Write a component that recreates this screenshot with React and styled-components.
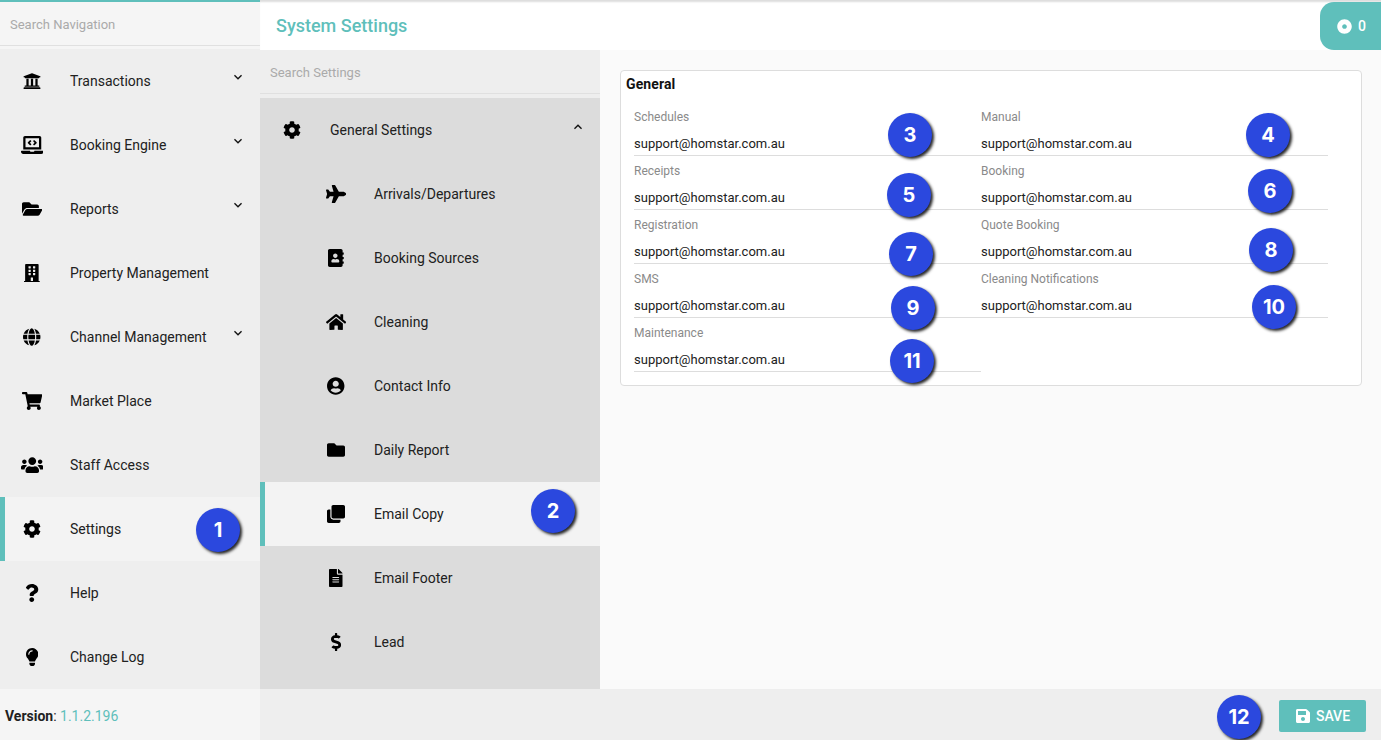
import React from 'react';
import styled, { createGlobalStyle } from 'styled-components';
import {
  FaUniversity, FaLaptopCode, FaFolderOpen, FaBuilding, FaGlobe, FaShoppingCart, FaUsers, FaCog,
  FaQuestion, FaLightbulb, FaPlane, FaAddressBook, FaHome, FaUserCircle, FaFolder, FaClone,
  FaFileAlt, FaDollarSign, FaSave, FaDotCircle,
} from 'react-icons/fa';
import { MdExpandMore, MdExpandLess } from 'react-icons/md';

const teal = '#5fbfbb';

const Global = createGlobalStyle`
  html, body { margin: 0; padding: 0; }
  body { font-family: Roboto, "Liberation Sans", sans-serif; font-size: 14px; color: #212121; overflow: hidden; }
`;

const Shell = styled.div`
  position: relative;
  display: flex;
  width: 1381px;
  height: 740px;
  overflow: hidden;
  background: #fafafa;
`;

const Sidebar = styled.aside`
  width: 260px;
  flex: none;
  display: flex;
  flex-direction: column;
  border-top: 2px solid ${teal};
  box-sizing: border-box;
  background: #eee;
`;

const SearchArea = styled.div`
  flex: none;
  background: ${(p) => p.$bg};
  padding-bottom: ${(p) => p.$gap}px;
`;

const SearchBox = styled.div`
  height: 44px;
  box-sizing: border-box;
  display: flex;
  align-items: center;
  padding: 1px 0 0 10px;
  border-bottom: 1px solid #e0e0e0;
  color: #aaa;
  font-size: 13px;
`;

const NavList = styled.nav`
  flex: 1;
  display: flex;
  flex-direction: column;
  background: ${(p) => p.$bg};
`;

const NavRow = styled.div`
  position: relative;
  height: 64px;
  flex: none;
  display: flex;
  align-items: center;
  box-sizing: border-box;
  padding-left: ${(p) => p.$indent}px;
  background: ${(p) => (p.$active ? '#f3f3f3' : 'transparent')};
  border-left: ${(p) => (p.$active ? `5px solid ${teal}` : 'none')};
`;

// FontAwesome glyphs keep their own width, $w is viewBox width / 512
const NavIcon = styled.span`
  width: 22px;
  flex: none;
  display: flex;
  justify-content: center;
  margin-left: ${(p) => (p.$active ? -5 : 0)}px;
  color: #000;
  svg { width: ${(p) => 18 * p.$w}px; height: 18px; flex: none; }
`;

const NavLabel = styled.span`
  margin-left: 27px;
  font-size: 14px;
  color: #212121;
`;

const Chevron = styled.span`
  position: absolute;
  right: 14px;
  top: ${(p) => p.$top}px;
  display: flex;
  font-size: 16px;
  color: #111;
`;

const VersionBar = styled.div`
  height: 51px;
  flex: none;
  display: flex;
  align-items: center;
  box-sizing: border-box;
  padding: 2px 0 0 5px;
  background: #f5f5f5;
  font-size: 14px;
  b { font-weight: 700; }
  span { color: ${teal}; }
`;

const Main = styled.div`
  flex: 1;
  min-width: 0;
  display: flex;
  flex-direction: column;
`;

const Header = styled.header`
  height: 50px;
  flex: none;
  display: flex;
  justify-content: space-between;
  background: #fff;
  box-sizing: border-box;
  padding-top: 2px;
  box-shadow: inset 0 3px 2px -1px #ddd;
`;

const Title = styled.h1`
  margin: 0;
  padding-left: 16px;
  font-size: 18px;
  line-height: 47px;
  font-weight: 500;
  color: ${teal};
`;

const CountPill = styled.div`
  width: 61px;
  display: flex;
  align-items: center;
  gap: 6px;
  box-sizing: border-box;
  padding-left: 17px;
  background: ${teal};
  border-radius: 14px 0 0 14px;
  color: #fff;
  font-size: 14px;
  font-weight: 500;
  svg { font-size: 15px; }
`;

const Body = styled.div`
  flex: 1;
  min-height: 0;
  display: flex;
`;

const SubColumn = styled.div`
  width: 340px;
  flex: none;
  display: flex;
  flex-direction: column;
  background: #eee;
`;

const Content = styled.section`
  flex: 1;
  padding: 20px 19px 0 20px;
  background: #fafafa;
`;

const Card = styled.div`
  height: 316px;
  box-sizing: border-box;
  padding: 5px 13px 0 5px;
  background: #fff;
  border: 1px solid #ddd;
  border-radius: 4px;
`;

const CardTitle = styled.h2`
  margin: 0;
  font-size: 14px;
  line-height: 16px;
  font-weight: 700;
  letter-spacing: 0.12px;
  color: #111;
`;

const FieldGrid = styled.div`
  display: grid;
  grid-template-columns: 347px 347px;
  grid-auto-rows: 54px;
  margin: 10px 0 0 8px;
`;

const Field = styled.div`
  box-sizing: border-box;
  height: 54px;
  padding-top: 8px;
  border-bottom: 1px solid #ddd;
`;

const FieldLabel = styled.div`
  font-size: 12px;
  line-height: 14px;
  color: #8a8a8a;
`;

const FieldValue = styled.div`
  margin-top: 12px;
  font-size: 13px;
  line-height: 15px;
  color: #212121;
`;

const ActionBar = styled.footer`
  height: 51px;
  flex: none;
  display: flex;
  justify-content: flex-end;
  align-items: flex-start;
  box-sizing: border-box;
  padding: 11px 15px 0 0;
  background: #eee;
`;

const SaveButton = styled.button`
  width: 87px;
  height: 32px;
  display: flex;
  align-items: center;
  justify-content: center;
  gap: 5px;
  border: none;
  border-radius: 2px;
  background: ${teal};
  color: #fff;
  font-family: inherit;
  font-size: 14px;
  font-weight: 500;
  svg { font-size: 16px; }
`;

// numbered callouts drawn over the screenshot
const Callout = styled.div`
  position: absolute;
  left: ${(p) => p.$x - 22}px;
  top: ${(p) => p.$y - 22}px;
  width: 44px;
  height: 44px;
  display: flex;
  align-items: center;
  justify-content: center;
  border-radius: 50%;
  background: #2b48de;
  box-shadow: 2px 2px 3px rgba(0, 0, 0, 0.85);
  color: #fff;
  font-family: Inter, "Liberation Sans", sans-serif;
  font-size: 20px;
  font-weight: 700;
`;

const mainNav = [
  { label: 'Transactions', icon: <FaUniversity />, w: 1, more: true },
  { label: 'Booking Engine', icon: <FaLaptopCode />, w: 1.25, more: true },
  { label: 'Reports', icon: <FaFolderOpen />, w: 1.125, more: true },
  { label: 'Property Management', icon: <FaBuilding />, w: 0.875 },
  { label: 'Channel Management', icon: <FaGlobe />, w: 0.97, more: true },
  { label: 'Market Place', icon: <FaShoppingCart />, w: 1.125 },
  { label: 'Staff Access', icon: <FaUsers />, w: 1.25 },
  { label: 'Settings', icon: <FaCog />, w: 1, active: true },
  { label: 'Help', icon: <FaQuestion />, w: 0.75 },
  { label: 'Change Log', icon: <FaLightbulb />, w: 0.6875 },
];

const subNav = [
  { label: 'Arrivals/Departures', icon: <FaPlane />, w: 1.125 },
  { label: 'Booking Sources', icon: <FaAddressBook />, w: 0.875 },
  { label: 'Cleaning', icon: <FaHome />, w: 1.125 },
  { label: 'Contact Info', icon: <FaUserCircle />, w: 0.97 },
  { label: 'Daily Report', icon: <FaFolder />, w: 1 },
  { label: 'Email Copy', icon: <FaClone />, w: 1, active: true },
  { label: 'Email Footer', icon: <FaFileAlt />, w: 0.75 },
  { label: 'Lead', icon: <FaDollarSign />, w: 0.5625 },
];

const fields = [
  'Schedules', 'Manual', 'Receipts', 'Booking', 'Registration', 'Quote Booking',
  'SMS', 'Cleaning Notifications', 'Maintenance',
];

const callouts = [
  [218, 530], [553, 511], [910, 135], [1268, 135], [909, 195], [1270, 191],
  [911, 254], [1271, 250], [913, 308], [1274, 307], [912, 361], [1239, 717],
];

const App = () => (
  <Shell>
    <Global />
    <Sidebar>
      <SearchArea $bg="#f5f5f5" $gap={3}>
        <SearchBox>Search Navigation</SearchBox>
      </SearchArea>
      <NavList>
        {mainNav.map((item) => (
          <NavRow key={item.label} $indent={21} $active={item.active}>
            <NavIcon $active={item.active} $w={item.w}>{item.icon}</NavIcon>
            <NavLabel>{item.label}</NavLabel>
            {item.more && <Chevron $top={20}><MdExpandMore /></Chevron>}
          </NavRow>
        ))}
      </NavList>
      <VersionBar><b>Version</b>:&nbsp;<span>1.1.2.196</span></VersionBar>
    </Sidebar>
    <Main>
      <Header>
        <Title>System Settings</Title>
        <CountPill><FaDotCircle />0</CountPill>
      </Header>
      <Body>
        <SubColumn>
          <SearchArea $bg="#eee" $gap={4}>
            <SearchBox>Search Settings</SearchBox>
          </SearchArea>
          <NavList $bg="#dcdcdc">
            <NavRow $indent={21}>
              <NavIcon $w={1}><FaCog /></NavIcon>
              <NavLabel>General Settings</NavLabel>
              <Chevron $top={21}><MdExpandLess /></Chevron>
            </NavRow>
            {subNav.map((item) => (
              <NavRow key={item.label} $indent={65} $active={item.active}>
                <NavIcon $active={item.active} $w={item.w}>{item.icon}</NavIcon>
                <NavLabel>{item.label}</NavLabel>
              </NavRow>
            ))}
          </NavList>
        </SubColumn>
        <Content>
          <Card>
            <CardTitle>General</CardTitle>
            <FieldGrid>
              {fields.map((name) => (
                <Field key={name}>
                  <FieldLabel>{name}</FieldLabel>
                  <FieldValue>support@homstar.com.au</FieldValue>
                </Field>
              ))}
            </FieldGrid>
          </Card>
        </Content>
      </Body>
      <ActionBar>
        <SaveButton><FaSave />SAVE</SaveButton>
      </ActionBar>
    </Main>
    {callouts.map(([x, y], i) => (
      <Callout key={i} $x={x} $y={y}>{i + 1}</Callout>
    ))}
  </Shell>
);

export default App;
